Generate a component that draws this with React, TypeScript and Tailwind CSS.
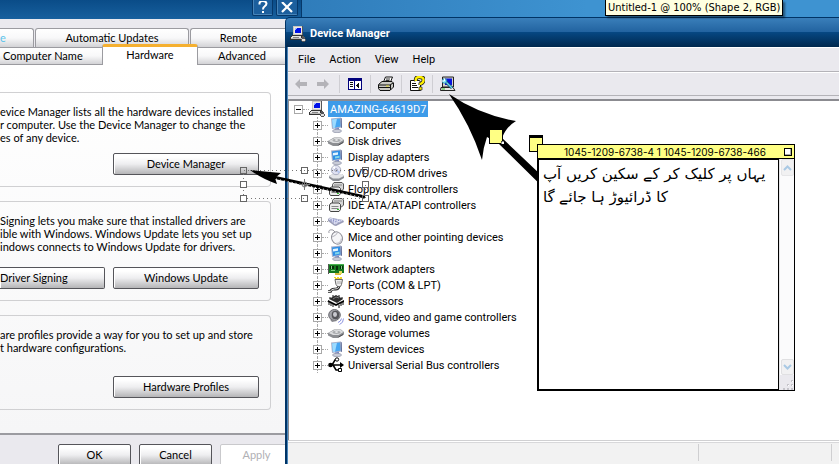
import React from 'react';

type IconProps = { className?: string };

const Svg: React.FC<{ children: React.ReactNode; className?: string; crisp?: boolean }> = ({ children, className = 'size-4', crisp }) => (
  <svg viewBox="0 0 16 16" className={`shrink-0 ${className}`} shapeRendering={crisp ? 'crispEdges' : 'auto'} aria-hidden="true">
    {children}
  </svg>
);

const WorkstationIcon = ({ className }: IconProps) => (
  <Svg className={className} crisp>
    <path d="M3 0h10v10H3z" fill="#55565a" />
    <path d="M3 0h9v9H3z" fill="#c9c7c2" />
    <path d="M4 1h8v7H4z" fill="#eceae6" />
    <path d="M5 2h6v5H5z" fill="#0010e8" />
    <path d="M5 2h2v1H5zM5 3h1v1H5z" fill="#9ab8ff" />
    <path d="M2 9h11v1h1v4H0v-3h1v-1h1z" fill="#333" />
    <path d="M2 10h9v1H2zM1 11h10v1H1z" fill="#e4e4e4" />
    <path d="M3 11h6v1H3z" fill="#888" />
    <path d="M1 12h11v1H1z" fill="#b9b9b9" />
    <path d="M12 10h2v1h1v2h1v2h-1v1h-3v-1h-1v-2h1z" fill="#55565a" />
    <path d="M12 13h3v2h-3z" fill="#dcdcdc" />
  </Svg>
);

const ScreenIcon = () => (
  <Svg>
    <path d="M3 1.500l9.500-1 1 10L4 12z" fill="#a9b2cc" />
    <path d="M4 2.500l8-1 .5 8-7.500 1.500z" fill="#46a6f2" />
    <path d="M4 2.500l5-.7-2 9-2 .2z" fill="#9ddbff" />
    <path d="M12.500.5l1.300 1 .2 9-1 .5z" fill="#5f6b96" />
    <path d="M7 11.500l4-.7v2.700H7z" fill="#7788c4" />
    <ellipse cx="9" cy="14" rx="4.500" ry="1.700" fill="#c9ccd8" stroke="#8f94a8" strokeWidth=".7" />
  </Svg>
);

const DisplayIcon = () => (
  <Svg>
    <path d="M3 1.500l9.500-1 1 10L4 12z" fill="#a9b2cc" />
    <path d="M4 2.500l8-1 .5 8-7.500 1.500z" fill="#2f8fe6" />
    <path d="M5 4l5-.7v2.500l-5 .7z" fill="#e2f4ff" />
    <path d="M7 7.500l4.500-.7v2L7 9.500z" fill="#84d6ea" />
    <path d="M12.500.5l1.300 1 .2 9-1 .5z" fill="#5f6b96" />
    <path d="M7 11.500l4-.7v2.700H7z" fill="#7788c4" />
    <ellipse cx="9" cy="14" rx="4.500" ry="1.700" fill="#c9ccd8" stroke="#8f94a8" strokeWidth=".7" />
  </Svg>
);

const DriveIcon = () => (
  <Svg>
    <path d="M0 8l6-3.500h7l3 2.500v2.500L10 13H5l-5-2.500z" fill="#8c8e92" />
    <path d="M.5 8L6.500 5H13l2.500 2-5 3H5z" fill="#dcdddf" />
    <ellipse cx="8.500" cy="7.300" rx="4" ry="1.600" fill="#a9abae" />
    <ellipse cx="8.500" cy="7" rx="1.500" ry=".8" fill="#f5f5f5" />
    <path d="M10.500 12l4.500-2.500" stroke="#4c4c50" />
  </Svg>
);

const OpticalIcon = () => (
  <Svg>
    <path d="M1 11l4-2h9l2 2v2l-5 3H5l-4-3z" fill="#8d9097" />
    <path d="M1 11l4-2h9l2 2-5 2.500H5z" fill="#e4e5e8" />
    <circle cx="8" cy="5" r="4.700" fill="#e0e2f2" stroke="#9a9eb4" strokeWidth=".8" />
    <path d="M8 5L4.500 2.500 6.500 1z" fill="#fff" />
    <path d="M8 5l4 1.500-1.500 2z" fill="#b5c7ef" />
    <circle cx="8" cy="5" r="1.300" fill="#fff" stroke="#7d84a8" strokeWidth=".8" />
  </Svg>
);

const ControllerIcon = () => (
  <Svg>
    <path d="M4.500 3.500L6 1.500h8l1.500 1.500v5l-2 2h-9z" fill="#d6d6d6" stroke="#555" />
    <path d="M1.500 8L3 6h8l1.500 1.500v5l-1.500 2H2.500l-1-1.500z" fill="#ececec" stroke="#444" />
    <path d="M3.500 9.500h7M3.500 11.500h7M6 4h8" stroke="#888" />
    <path d="M9 12h2v1H9z" fill="#30c030" />
  </Svg>
);

const KeyboardIcon = () => (
  <Svg>
    <path d="M0 6l2-1.500L15 7l1 2-8 4-2-.5L0 8z" fill="#9a9db8" />
    <path d="M.5 6l2-1L15 7.500l-8 4z" fill="#e2e4f5" />
    <path d="M2.500 6.500l8 3M5 6l8 2M2.500 7.500l5 2.500" stroke="#8188c0" strokeDasharray="1.500 1" />
  </Svg>
);

const MouseIcon = () => (
  <Svg>
    <path d="M1 4q-1-4 4-3l2 2" fill="none" stroke="#9a9aa2" />
    <ellipse cx="9" cy="9" rx="5.300" ry="6.300" transform="rotate(-25 9 9)" fill="#f6f6f8" stroke="#909098" />
    <path d="M4 8q4-1 6-5" fill="none" stroke="#b4b4bc" />
    <path d="M8 14.500q5 0 5.500-5" fill="none" stroke="#c8c8d0" strokeWidth="1.500" />
  </Svg>
);

const NetworkIcon = () => (
  <Svg crisp>
    <path d="M0 3h1v10H0z" fill="#555" />
    <path d="M1 3h15v9H1z" fill="#14781e" />
    <path d="M1 3h15v1H1z" fill="#48b050" />
    <path d="M2 5h4v3H2zM8 5h2v4H8zM12 5h3v3h-3z" fill="#082c0c" />
    <path d="M3 5h1v3H3zM13 5h1v3h-1zM3 9h4v1H3z" fill="#7ad27e" />
    <path d="M7 12h6v2H7z" fill="#d6b83a" />
    <path d="M11 10h3v3h-3z" fill="#e3dc5b" />
  </Svg>
);

const PortIcon = () => (
  <Svg>
    <path d="M6 0h2v1H6zM9 0h2v1H9zM12 0h2v1h-2zM7 1h7v1H7z" fill="#f1d52a" />
    <path d="M7 2.500h7.500l-1 5-1 2h-3l-1.500-2z" fill="#ececec" stroke="#666" />
    <path d="M11 9.500q-.5 3-4.500 2.500-3.500 0-4 2.500H0" fill="none" stroke="#222" strokeWidth="2.600" />
    <path d="M11 9.500q-.5 3-4.500 2.500-3.500 0-4 2.500H0" fill="none" stroke="#e4e4e4" />
    <path d="M10 4v3M12 4v3" stroke="#aaa" />
  </Svg>
);

const ChipIcon = () => (
  <Svg>
    <path d="M1 6l7-4 7 4-6 4z" fill="#2c2c2c" />
    <path d="M0 7l8 4 8-4v2l-8 4-8-4z" fill="#000" />
    <path d="M1 9v3M3 10v3M5 11v3M11 12v3M13 10v3M15 9v3M2 4v2M5 2v2M11 2v2M14 4v2" stroke="#111" />
    <path d="M5 6l3-2 3 1" stroke="#777" fill="none" />
  </Svg>
);

const SpeakerIcon = () => (
  <Svg>
    <ellipse cx="6.500" cy="6" rx="5.800" ry="5.500" fill="#a2a2a8" stroke="#6a6a70" />
    <ellipse cx="7.500" cy="6" rx="3.800" ry="4.200" fill="#55555a" />
    <ellipse cx="7" cy="5.500" rx="2" ry="2.400" fill="#c9c9d0" />
    <path d="M2 10.500l2 2.500 5-1" fill="#88888e" />
    <path d="M10 13.500q3-1 3.500-4M11.500 15.500q4-1.500 4-6" fill="none" stroke="#8e95e0" />
  </Svg>
);

const UsbIcon = () => (
  <Svg>
    <path d="M1 8h12M4 8l3-5h3M5 8l3 5h3" fill="none" stroke="#000" strokeWidth="1.500" />
    <path d="M12 5l4 3-4 3z" fill="#000" />
    <circle cx="2.500" cy="8" r="2.300" />
    <circle cx="9" cy="2.500" r="1.700" fill="#fff" stroke="#000" />
    <path d="M10.500 11.500h3v3h-3z" fill="#fff" stroke="#000" />
  </Svg>
);

const BackIcon = () => (
  <Svg><path d="M2 8l5-5v3h7v4H7v3z" fill="#b4b3b8" /></Svg>
);

const ForwardIcon = () => (
  <Svg><path d="M14 8L9 3v3H2v4h7v3z" fill="#b4b3b8" /></Svg>
);

const PaneIcon = () => (
  <Svg crisp>
    <path d="M1 2h14v12H1z" fill="#00007c" />
    <path d="M2 5h5v8H2zM8 5h6v8H8z" fill="#fff" />
    <path d="M3 6h3v1H3zM3 8h3v1H3zM3 10h3v1H3z" fill="#111" />
    <path d="M11 7h1v5h-1zM10 8h1v3h-1zM9 9h1v1H9z" fill="#111" />
  </Svg>
);

const PrinterIcon = () => (
  <Svg>
    <path d="M5.500 6l2-5h7l-2 5z" fill="#fff" stroke="#111" />
    <path d="M8 3h4M7.500 4.500h4" stroke="#333" />
    <path d="M.5 8.500L4 5.500h10l1.500 1.500v4L12 14.500H2l-1.500-2z" fill="#c9c9c4" stroke="#111" />
    <path d="M1 9h11l3-2M1 11.500h11" fill="none" stroke="#111" />
    <path d="M12.500 9v5" stroke="#111" />
    <path d="M8 10h3" stroke="#e0d72d" />
  </Svg>
);

const HelpSheetIcon = () => (
  <Svg>
    <path d="M1.500 4.500h9l1 2v8h-10z" fill="#fff" stroke="#111" />
    <path d="M3 7.500h4M3 9.500h5M3 11.500h6" stroke="#111" />
    <path d="M7 5q-1-4 3.500-4Q15 1 14.500 4.500q0 2-3 3.500v1" fill="none" stroke="#222" strokeWidth="4" />
    <path d="M7 5q-1-4 3.500-4Q15 1 14.500 4.500q0 2-3 3.500v1" fill="none" stroke="#fff000" strokeWidth="2.400" />
    <path d="M10 11h3v3h-3z" fill="#fff000" stroke="#222" strokeWidth=".7" />
  </Svg>
);

const ScanIcon = () => (
  <Svg>
    <path d="M2.500 1h11v10h-11z" fill="#d5d2ca" stroke="#222" />
    <path d="M5 2.500h7V9H5z" fill="#0712df" />
    <path d="M1 11.500h12l2 3H.5z" fill="#e7e7e2" stroke="#222" />
    <path d="M2 13h3" stroke="#36c22e" />
    <path d="M4 4l8 8" stroke="#174b6b" strokeWidth="3" />
    <path d="M4 4l8 8" stroke="#68d8ef" strokeWidth="1.500" />
    <circle cx="4.500" cy="5" r="2.300" fill="#76e1f4" stroke="#2a89ab" strokeWidth=".8" />
    <path d="M2 5h2.500V2.500" stroke="#fff" fill="none" />
  </Svg>
);

const DEVICES: { name: string; Icon: React.FC }[] = [
  { name: 'Computer', Icon: ScreenIcon },
  { name: 'Disk drives', Icon: DriveIcon },
  { name: 'Display adapters', Icon: DisplayIcon },
  { name: 'DVD/CD-ROM drives', Icon: OpticalIcon },
  { name: 'Floppy disk controllers', Icon: ControllerIcon },
  { name: 'IDE ATA/ATAPI controllers', Icon: ControllerIcon },
  { name: 'Keyboards', Icon: KeyboardIcon },
  { name: 'Mice and other pointing devices', Icon: MouseIcon },
  { name: 'Monitors', Icon: DisplayIcon },
  { name: 'Network adapters', Icon: NetworkIcon },
  { name: 'Ports (COM & LPT)', Icon: PortIcon },
  { name: 'Processors', Icon: ChipIcon },
  { name: 'Sound, video and game controllers', Icon: SpeakerIcon },
  { name: 'Storage volumes', Icon: DriveIcon },
  { name: 'System devices', Icon: ScreenIcon },
  { name: 'Universal Serial Bus controllers', Icon: UsbIcon },
];

const Expander = ({ open }: { open?: boolean }) => (
  <button
    aria-label={open ? 'Collapse' : 'Expand'}
    className="grid size-[9px] shrink-0 place-items-center border border-[#a8a8a8] bg-white"
  >
    <svg viewBox="0 0 5 5" className="size-[5px]" shapeRendering="crispEdges" aria-hidden="true">
      <path d={open ? 'M0 2h5v1H0z' : 'M0 2h5v1H0zM2 0h1v5H2z'} />
    </svg>
  </button>
);

const XpButton = ({ children, className = 'w-[146px] rounded-xs border text-center' }: { children: React.ReactNode; className?: string }) => (
  <button
    className={`h-[22px] shrink-0 border-[#55555a] bg-linear-to-b from-white from-15% via-[#eeeef0] via-50% to-[#b5b5b7] shadow-[inset_1px_1px_0_#fff] ${className}`}
  >
    {children}
  </button>
);

const Group = ({ lines, children, className }: { lines: string[]; children: React.ReactNode; className: string }) => (
  <section className={`mr-[15px] flex flex-col justify-between rounded-r-[4px] border border-l-0 border-[#d0d0d2] pt-3 pr-[11px] pb-[11px] ${className}`}>
    <p className="leading-[13px] whitespace-nowrap">
      {lines.map((line) => (
        <span key={line} className="block">{line}</span>
      ))}
    </p>
    <div className="flex justify-end gap-2">{children}</div>
  </section>
);

const tabBase = 'border-[#9b9ba0] bg-linear-to-b from-white via-[#f8f8f9] to-[#d3d3d6] whitespace-nowrap';

const SystemProperties = () => (
  <section className="absolute inset-y-0 left-0 flex w-[302px] flex-col overflow-hidden bg-[#eae9ee] font-[Lato,'Liberation_Sans',sans-serif] text-[11px] text-black">
    <header className="flex h-[19px] shrink-0 items-start justify-end gap-[3px] border-r border-[#06386a] bg-linear-to-b from-[#0a4c88] to-[#17609e] pr-[3px]">
      <button aria-label="Help" className="grid h-4 w-[21px] place-items-center rounded-b-xs border border-t-0 border-[#06386a] bg-[#1c5f9d] shadow-[inset_1px_-1px_0_#4784b8]">
        <svg viewBox="0 0 12 14" className="h-[14px] w-3" aria-hidden="true">
          <path d="M2.500 3.500V2Q3 0 6 0t3.500 2.500Q9.500 4 7.500 5.500 6 6.500 6 8.500" fill="none" stroke="#fff" strokeWidth="2" />
          <path d="M5 10h2v2H5z" fill="#fff" />
        </svg>
      </button>
      <button aria-label="Close" className="grid h-4 w-[22px] place-items-center rounded-b-xs border border-t-0 border-[#06386a] bg-[#1c5f9d] shadow-[inset_1px_-1px_0_#4784b8]">
        <svg viewBox="0 0 12 12" className="size-3" aria-hidden="true">
          <path d="M1 0l10 10M11 0L1 10" stroke="#fff" strokeWidth="2.200" />
        </svg>
      </button>
    </header>

    <div className="mr-4 flex min-h-0 flex-1 flex-col">
      <div role="tablist" className="pt-[9px]">
        <div className="flex h-[19px] gap-px leading-[18px]">
          <button role="tab" className={`w-[34px] rounded-tr-[3px] border-t border-r text-left text-[#5cc3ea] ${tabBase}`}>e</button>
          <button role="tab" className={`w-[154px] rounded-t-[3px] border border-b-0 text-center ${tabBase}`}>Automatic Updates</button>
          <button role="tab" className={`flex-1 rounded-tl-[3px] border-t border-l text-center ${tabBase}`}>Remote</button>
        </div>
        <div className="flex h-[18px] leading-[16px]">
          <button role="tab" className={`w-[102px] border-y pl-[3px] text-left ${tabBase}`}>Computer Name</button>
          <button role="tab" aria-selected="true" className="-mt-[3px] w-[96px] rounded-t-[3px] border-x border-t-[3px] border-x-[#9b9ba0] border-t-[#f5b030] bg-white pb-1 text-center">
            Hardware
          </button>
          <button role="tab" className={`flex-1 border-y text-center ${tabBase}`}>Advanced</button>
        </div>
      </div>

      <div className="flex shrink-0 flex-col gap-[14px] border-b-2 border-[#9b9ba0] bg-linear-to-b from-white to-[#f6f6f7] pt-[27px] pb-[23px]">
        <Group
          className="h-[95px]"
          lines={['evice Manager lists all the hardware devices installed', 'r computer. Use the Device Manager to change the', 'es of any device.']}
        >
          <XpButton>Device Manager</XpButton>
        </Group>
        <Group
          className="h-[100px]"
          lines={['Signing lets you make sure that installed drivers are', 'ible with Windows. Windows Update lets you set up', 'indows connects to Windows Update for drivers.']}
        >
          <XpButton className="w-[105px] rounded-r-xs border border-l-0 text-left">Driver Signing</XpButton>
          <XpButton>Windows Update</XpButton>
        </Group>
        <Group
          className="h-[95px]"
          lines={['are profiles provide a way for you to set up and store', 't hardware configurations.']}
        >
          <XpButton>Hardware Profiles</XpButton>
        </Group>
      </div>

      <div className="flex gap-2 pt-[9px] pl-[58px]">
        <XpButton className="w-[73px] rounded-xs border text-center">OK</XpButton>
        <XpButton className="w-[73px] rounded-xs border text-center">Cancel</XpButton>
        <button disabled className="h-[22px] w-[73px] shrink-0 rounded-xs border border-[#c9c9cc] bg-white text-[#b0b0b4]">Apply</button>
      </div>
    </div>
  </section>
);

const ToolButton = ({ label, children }: { label: string; children: React.ReactNode }) => (
  <button aria-label={label} className="grid h-[22px] w-[22px] place-items-center">{children}</button>
);

const ToolSeparator = () => <span className="mx-1 h-[18px] w-px bg-[#cfced3]" />;

const DeviceManager = () => (
  <section className="absolute top-[17px] right-0 bottom-0 left-[285px] flex flex-col rounded-tl-[5px] border-t border-l border-[#003466] bg-[#003466] font-[Roboto,Tahoma,sans-serif] text-[11px] text-black">
    <header className="flex h-[29px] shrink-0 items-center gap-1 rounded-tl-[4px] bg-[linear-gradient(#3a7fba,#2263a0_48%,#064782_50%,#00284e)] pt-[3px] pl-[4px]">
      <WorkstationIcon />
      <h1 className="font-bold text-white">Device Manager</h1>
    </header>

    <div className="ml-px flex flex-1 flex-col border-l border-[#4a86bb] bg-[#eae9ee]">
      <nav className="flex h-[25px] shrink-0 items-center gap-[14px] border-t border-b border-t-white border-b-[#b4b3b8] pt-[2px] pl-[10px]">
        <button>File</button>
        <button>Action</button>
        <button>View</button>
        <button>Help</button>
      </nav>
      <div className="flex h-6 shrink-0 items-center border-t border-b border-t-white border-b-[#b4b3b8] pl-[2px]">
        <ToolButton label="Back"><BackIcon /></ToolButton>
        <ToolButton label="Forward"><ForwardIcon /></ToolButton>
        <span className="w-px" />
        <ToolSeparator />
        <ToolButton label="Show/Hide Console Tree"><PaneIcon /></ToolButton>
        <ToolSeparator />
        <ToolButton label="Print"><PrinterIcon /></ToolButton>
        <ToolSeparator />
        <ToolButton label="Help topics"><HelpSheetIcon /></ToolButton>
        <ToolSeparator />
        <ToolButton label="Scan for hardware changes"><ScanIcon /></ToolButton>
      </div>

      <div className="mt-[3px] flex-1 border-t-2 border-l border-[#8b8b90] bg-white">
        <ul className="leading-[14px]">
          <li>
            <div className="flex h-4 items-center pl-[5px]">
              <Expander open />
              <span className="w-[6px] border-t border-dotted border-[#a8a8a8]" />
              <WorkstationIcon />
              <span className="ml-[3px] bg-[#3d9be9] px-[2px] pt-[2px] text-white">AMAZING-64619D7</span>
            </div>
            <ul>
              {DEVICES.map(({ name, Icon }) => (
                <li key={name} className="flex h-4 items-center pl-6">
                  <span className="flex flex-col items-center">
                    <span className="h-[4px] border-l border-dotted border-[#a8a8a8]" />
                    <Expander />
                    <span className="h-[3px] border-l border-dotted border-[#a8a8a8]" />
                  </span>
                  <span className="w-[6px] border-t border-dotted border-[#a8a8a8]" />
                  <Icon />
                  <span className="ml-[4px] pt-[2px]">{name}</span>
                </li>
              ))}
            </ul>
          </li>
        </ul>
      </div>

      <footer className="flex h-6 shrink-0 items-center justify-end gap-[132px] border-t border-[#d0d0d2] bg-[#f2f2f2] pr-[7px] shadow-[inset_0_1px_0_#fff,inset_0_2px_0_#d8d8da]">
        <span className="h-[17px] w-px bg-[#cfcfd1]" />
        <span className="h-[17px] w-px bg-[#cfcfd1]" />
      </footer>
    </div>
  </section>
);

const HANDLES = [
  [243, 170], [304, 170], [365, 170],
  [243, 184], [365, 184],
  [243, 198], [304, 198], [365, 198],
];

// Arrow shapes drawn over both windows, with the transform box of the selected one
const Annotations = () => (
  <svg width="839" height="464" viewBox="0 0 839 464" className="pointer-events-none absolute top-0 left-0" aria-hidden="true">
    <path d="M449 94Q480 115 516 121Q506 127 502 138L560 193V204L498 143L487 137Q483 148 482 160Q470 124 449 94Z" />
    <g shapeRendering="crispEdges">
      <path d="M489.500 129.500h13v14h-13z" fill="#ffff84" stroke="#000" />
      <path d="M501 141h3v3h-3z" fill="#fff" stroke="#000" strokeWidth=".5" />
      <path d="M529.500 136.500h13v15h-13z" fill="#ffff84" stroke="#000" />
      <path d="M529 135h14v3h-14z" />
    </g>
    <path d="M250 170L281 173L275 178L277 184Q262 179 250 170Z" />
    <path d="M273 177L365 197" stroke="#000" strokeWidth="3" />
    <path d="M276 179L365 198" stroke="#fff" strokeWidth="1" strokeDasharray="1 3" />
    <g fill="none" stroke="#777" shapeRendering="crispEdges">
      <path d="M243.500 170.500h122v28h-122z" strokeDasharray="1 3" />
      {HANDLES.map(([x, y]) => (
        <path key={`${x}-${y}`} d={`M${x - 2.5} ${y - 2.5}h6v6h-6z`} stroke="#666" fill={x === 243 && y > 170 ? '#fff' : 'none'} />
      ))}
    </g>
    <circle cx="304.500" cy="184.500" r="2.500" fill="none" stroke="#777" />
    <path d="M304.500 179v11M299 184.500h11" stroke="#777" strokeWidth="1" />
  </svg>
);

const Note = () => (
  <aside className="absolute top-[144px] left-[537px] flex h-[247px] w-[258px] flex-col border border-black bg-white">
    <header className="flex h-[14px] shrink-0 items-center border-b border-black bg-[#ffff84] pr-[2px] font-[Inter,sans-serif] text-[10px] leading-3 text-black">
      <span className="flex-1 pl-2 text-center whitespace-nowrap">1045-1209-6738-4 1 1045-1209-6738-466</span>
      <button aria-label="Close note" className="size-[8px] border border-black bg-white shadow-[inset_-1px_-1px_0_#aaa]" />
    </header>
    <div className="flex min-h-0 flex-1">
      <p lang="ur" className="flex-1 border-t border-r border-b border-l border-black pt-[3px] pl-1 font-['DejaVu_Sans',sans-serif] text-[15px] leading-[23px] text-black">
        یہاں پر کلیک کر کے سکین کریں آپ
        <br />
        کا ڈرائیوڑ ہا جائے گا
      </p>
      <div className="flex w-[15px] flex-col items-center border-l border-[#e4e4e6] bg-[#fbfbfc]">
        <button aria-label="Scroll up" className="grid h-[17px] w-[13px] place-items-center rounded-xs border border-[#e6e6e8] bg-[#f1f1f2]">
          <svg viewBox="0 0 9 6" className="h-[6px] w-[9px]"><path d="M1 5l3.500-3.500L8 5" fill="none" stroke="#a9c9e4" strokeWidth="2" /></svg>
        </button>
        <span className="flex-1" />
        <button aria-label="Scroll down" className="grid h-[16px] w-[13px] place-items-center rounded-xs border border-[#e0e0e2] bg-[#f1f1f2]">
          <svg viewBox="0 0 9 6" className="h-[6px] w-[9px]"><path d="M1 1l3.500 3.500L8 1" fill="none" stroke="#a9c9e4" strokeWidth="2" /></svg>
        </button>
        <svg viewBox="0 0 14 15" className="h-[15px] w-[14px] bg-[#eae9ee]" shapeRendering="crispEdges" aria-hidden="true">
          <path d="M11 5h2v2h-2zM7 9h2v2H7zM11 9h2v2h-2zM3 13h2v2H3zM7 13h2v2H7zM11 13h2v2h-2z" fill="#c5c4ca" />
          <path d="M12 6h1v1h-1zM8 10h1v1H8zM12 10h1v1h-1z" fill="#fff" />
        </svg>
      </div>
    </div>
  </aside>
);

const App: React.FC = () => (
  <main className="relative h-screen min-h-[464px] overflow-hidden bg-linear-to-r from-[#2f7cba] from-35% to-[#3e93d1] to-70%">
    <SystemProperties />
    <DeviceManager />
    <Annotations />
    <Note />
    <div
      role="tooltip"
      className="absolute top-0 left-[605px] h-4 border border-t-0 border-black bg-[#ffffe1] px-[2px] font-['DejaVu_Sans_Condensed','DejaVu_Sans',Tahoma,sans-serif] text-[11px] leading-[15px] whitespace-nowrap text-black shadow-[2px_2px_2px_rgba(0,0,0,0.45)]"
    >
      Untitled-1 @ 100% (Shape 2, RGB)
    </div>
  </main>
);

export default App;
